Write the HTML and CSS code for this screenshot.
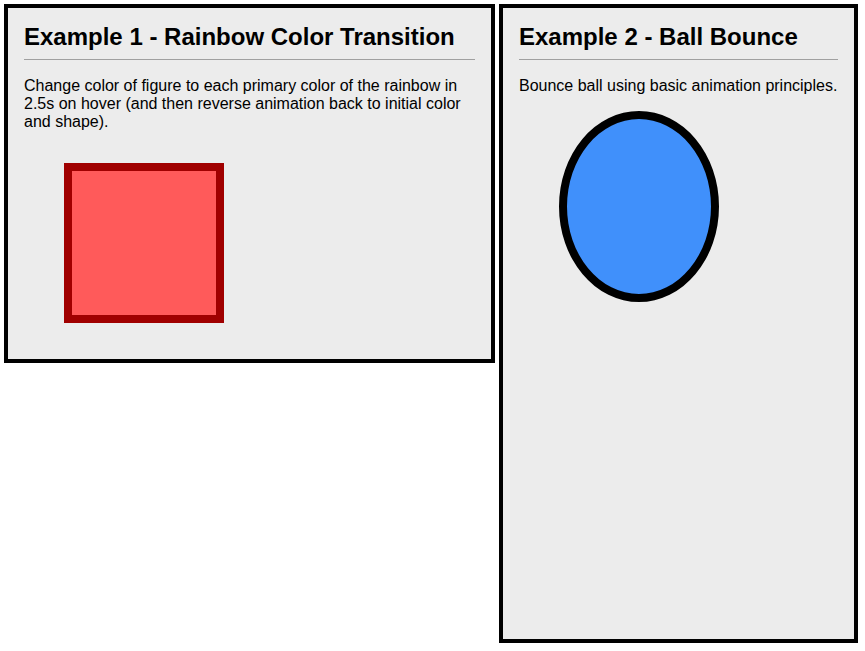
FILE: index.html
```html
<!DOCTYPE html>
<html>
<head>
<meta charset="utf-8">
<title>Examples</title>
<link rel="stylesheet" href="styles.css">
</head>
<body>
<div class="page">
  <section class="card card-rainbow">
    <h2 class="card-title">Example 1 - Rainbow Color Transition</h2>
    <p class="card-text">Change color of figure to each primary color of the rainbow in 2.5s on hover (and then reverse animation back to initial color and shape).</p>
    <div class="square"></div>
  </section>
  <section class="card card-ball">
    <h2 class="card-title">Example 2 - Ball Bounce</h2>
    <p class="card-text">Bounce ball using basic animation principles.</p>
    <div class="ball"></div>
  </section>
</div>
</body>
</html>
```
FILE: styles.css
```css
html, body {
  margin: 0;
  padding: 0;
  background: #fff;
}
body {
  font-family: "Liberation Sans", Arial, sans-serif;
  color: #000;
}
.page {
  display: flex;
  align-items: flex-start;
  gap: 4px;
  padding: 4px;
}
.card {
  box-sizing: border-box;
  border: 4px solid #000;
  background: #ececec;
  padding: 15px 16px 0 16px;
}
.card-rainbow {
  width: 491px;
  height: 359px;
}
.card-ball {
  width: 359px;
  height: 639px;
}
.card-title {
  margin: 0;
  font-size: 24px;
  line-height: 28px;
  font-weight: bold;
  padding-bottom: 8px;
  border-bottom: 1px solid #a0a0a0;
}
.card-text {
  margin: 17px 0 16px 0;
  font-size: 16px;
}
.square {
  box-sizing: border-box;
  width: 160px;
  height: 160px;
  margin: 32px 0 0 40px;
  background: #ff5a5a;
  border: 8px solid #a00000;
}
.ball {
  box-sizing: border-box;
  width: 160px;
  height: 191px;
  margin: 16px 0 0 40px;
  background: #4090fb;
  border: 8px solid #000;
  border-radius: 50%;
}
```
